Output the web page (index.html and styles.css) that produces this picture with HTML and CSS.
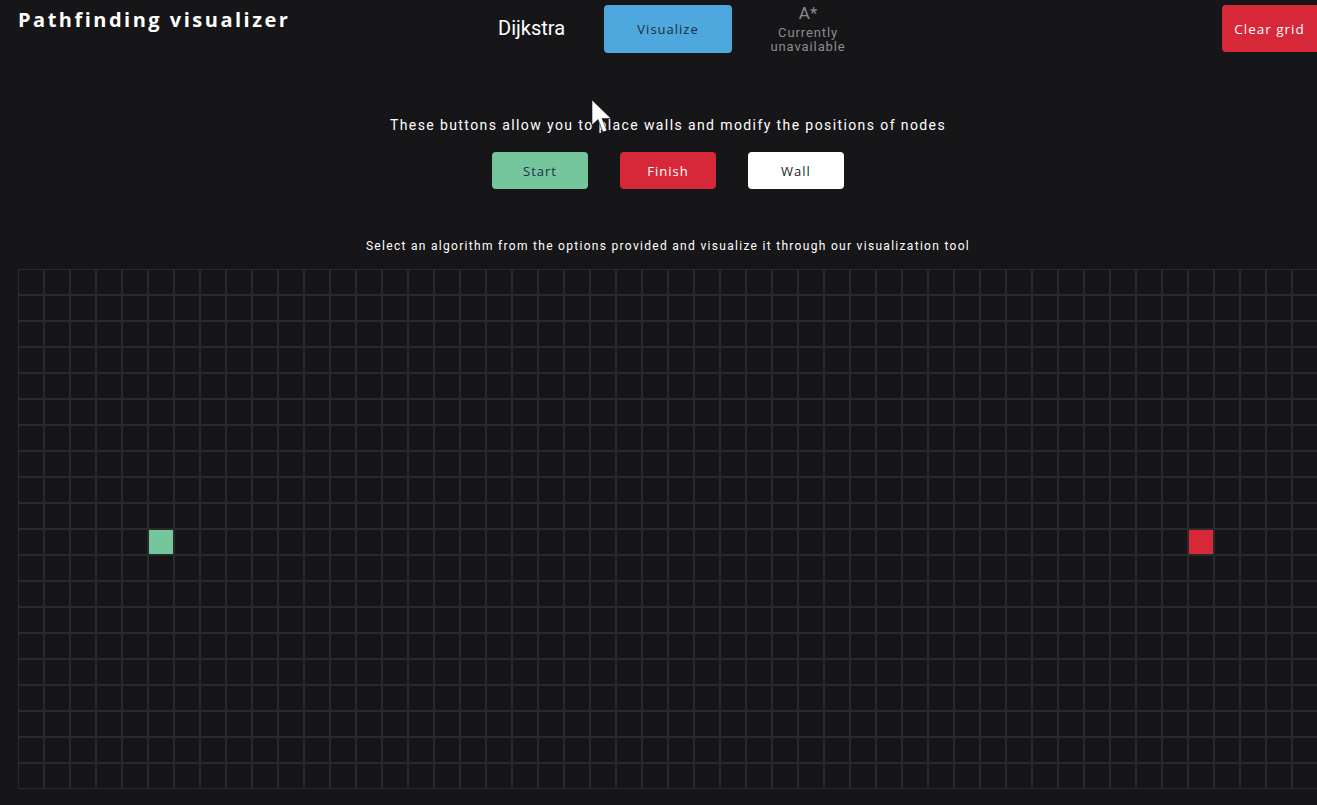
FILE: index.html
```html
<!DOCTYPE html>
<html lang="en">
<head>
<meta charset="utf-8">
<title>Pathfinding visualizer</title>
<link rel="stylesheet" href="styles.css">
</head>
<body>
<header class="topbar">
  <h1 class="title">Pathfinding visualizer</h1>
  <nav class="algos">
    <span class="algo-name">Dijkstra</span>
    <button class="btn btn-visualize">Visualize</button>
    <div class="algo-off">
      <span class="algo-off-name">A*</span>
      <span class="algo-off-note">Currently<br>unavailable</span>
    </div>
  </nav>
  <button class="btn btn-clear">Clear grid</button>
</header>
<main class="content">
  <p class="hint">These buttons allow you to place walls and modify the positions of nodes</p>
  <div class="tools">
    <button class="btn tool tool-start">Start</button>
    <button class="btn tool tool-finish">Finish</button>
    <button class="btn tool tool-wall">Wall</button>
  </div>
  <p class="sub">Select an algorithm from the options provided and visualize it through our visualization tool</p>
  <div class="grid" id="grid"></div>
</main>
<svg class="cursor" width="26" height="36" viewBox="0 0 26 36" aria-hidden="true">
  <path d="M1 1 L1 26 L7 20.5 L12 33 L16 31.5 L11 19.5 L20 19.5 Z" fill="#ffffff" stroke="#1a1a1a" stroke-width="0.6"/>
</svg>
<script src="script.js"></script>
</body>
</html>
```
FILE: styles.css
```css
html, body {
  margin: 0;
  padding: 0;
  overflow: hidden;
  background: #161618;
  color: #ffffff;
  font-family: "Roboto", "Liberation Sans", sans-serif;
}

.topbar {
  display: flex;
  align-items: flex-start;
  height: 58px;
  padding-left: 18px;
}

.title {
  flex: 0 0 480px;
  margin: 7px 0 0;
  font-family: "Open Sans", "Liberation Sans", sans-serif;
  font-weight: 700;
  font-size: 20px;
  line-height: 26px;
  letter-spacing: 2.5px;
  color: #ffffff;
}

.algos {
  display: flex;
  align-items: flex-start;
}

.algo-name {
  margin-top: 16px;
  font-size: 20px;
  line-height: 24px;
  color: #ffffff;
}

.btn {
  border: none;
  border-radius: 4px;
  cursor: pointer;
  font-family: "Open Sans", "Liberation Sans", sans-serif;
  font-size: 13px;
  letter-spacing: 1px;
  padding: 0;
}

.btn-visualize {
  margin: 5px 0 0 39px;
  width: 128px;
  height: 48px;
  background: #4ea8de;
  color: #1c2b3c;
}

.algo-off {
  margin: 5px 0 0 36px;
  width: 80px;
  display: flex;
  flex-direction: column;
  align-items: center;
  color: #8c8c8f;
}

.algo-off-name {
  font-size: 17px;
  line-height: 17px;
}

.algo-off-note {
  margin-top: 4px;
  font-size: 13px;
  line-height: 14px;
  letter-spacing: 0.9px;
  text-align: center;
}

.btn-clear {
  margin: 5px 0 0 auto;
  width: 95px;
  height: 47px;
  border-radius: 4px 0 0 4px;
  background: #d7283a;
  color: #ffffff;
  font-size: 13.5px;
}

.content {
  width: 1336px;
  display: flex;
  flex-direction: column;
  align-items: center;
}

.hint {
  margin: 57px 0 0;
  font-size: 14px;
  line-height: 20px;
  letter-spacing: 1.4px;
  color: #ffffff;
}

.tools {
  display: flex;
  gap: 32px;
  margin-top: 17px;
}

.tool {
  width: 96px;
  height: 37px;
  font-size: 13px;
}

.tool-start {
  background: #75c69d;
  color: #22304a;
}

.tool-finish {
  background: #d7283a;
  color: #ffffff;
}

.tool-wall {
  background: #ffffff;
  color: #222226;
}

.sub {
  margin: 49px 0 0;
  font-size: 12px;
  line-height: 16px;
  letter-spacing: 1.3px;
  color: #ffffff;
}

.grid {
  align-self: flex-start;
  margin: 15px 0 0 18px;
  display: grid;
  grid-template-columns: repeat(50, 26px);
  grid-auto-rows: 26px;
}

.cell {
  box-sizing: border-box;
  border: 1px solid #2a2a2c;
  background: #161618;
}

.cell-start {
  background: #75c69d;
}

.cell-finish {
  background: #d7283a;
}

.cursor {
  position: absolute;
  left: 591px;
  top: 99px;
}
```
FILE: script.js
```js
(function () {
  var grid = document.getElementById('grid');
  var rows = 20, cols = 50;
  var frag = document.createDocumentFragment();
  for (var r = 0; r < rows; r++) {
    for (var c = 0; c < cols; c++) {
      var d = document.createElement('div');
      d.className = 'cell';
      if (r === 10 && c === 5) d.className += ' cell-start';
      if (r === 10 && c === 45) d.className += ' cell-finish';
      frag.appendChild(d);
    }
  }
  grid.appendChild(frag);
})();
```
